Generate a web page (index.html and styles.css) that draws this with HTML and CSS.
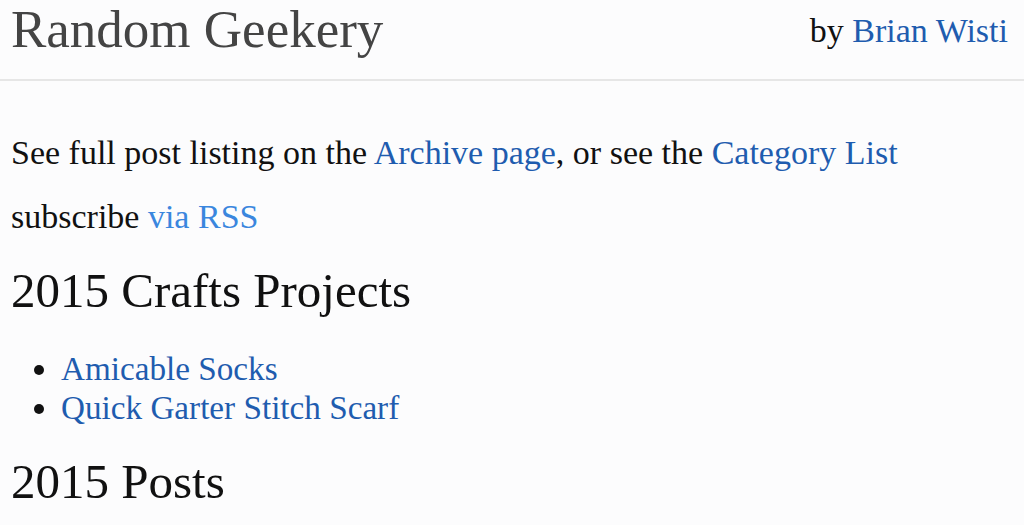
FILE: index.html
```html
<!DOCTYPE html>
<html lang="en">
<head>
<meta charset="utf-8">
<title>Random Geekery</title>
<link rel="stylesheet" href="styles.css">
</head>
<body>
<header class="site-header">
  <a class="site-title" href="#">Random Geekery</a>
  <div class="byline">by <a href="#">Brian Wisti</a></div>
</header>
<main class="content">
  <p class="intro">See full post listing on the <a href="#">Archive page</a>, or see the <a href="#">Category List</a></p>
  <p class="subscribe">subscribe <a class="rss" href="#">via RSS</a></p>
  <h2 class="section-title">2015 Crafts Projects</h2>
  <ul class="post-list">
    <li><a href="#">Amicable Socks</a></li>
    <li><a href="#">Quick Garter Stitch Scarf</a></li>
  </ul>
  <h2 class="section-title">2015 Posts</h2>
</main>
</body>
</html>
```
FILE: styles.css
```css
html, body {
  margin: 0;
  padding: 0;
}
body {
  background: #fcfcfd;
  color: #111;
  font-family: "Liberation Serif", "Times New Roman", serif;
  font-size: 34px;
  line-height: 40px;
}
a {
  color: #1f5caf;
  text-decoration: none;
}
.site-header {
  display: flex;
  justify-content: space-between;
  align-items: flex-start;
  height: 79px;
  padding: 0 16px 0 11px;
  border-bottom: 2px solid #e6e6e6;
  box-sizing: content-box;
}
.site-title {
  color: #444;
  font-size: 53px;
  line-height: 58px;
}
.byline {
  padding-top: 11px;
  color: #111;
}
.content {
  padding: 52px 11px 0;
}
.intro, .subscribe {
  margin: 0 0 24px;
}
.subscribe {
  margin-bottom: 25px;
}
.rss {
  color: #3a86de;
}
.section-title {
  font-weight: normal;
  font-size: 49px;
  line-height: 58px;
  margin: 0 0 29px;
  color: #111;
}
.post-list {
  margin: 0 0 26px;
  padding-left: 50px;
  font-size: 33.2px;
  line-height: 39px;
}
```
